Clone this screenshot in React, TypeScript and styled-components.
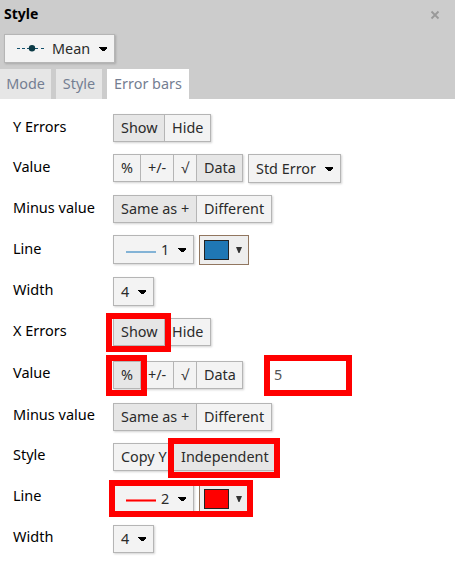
import React from 'react';
import styled, { createGlobalStyle } from 'styled-components';

const GlobalStyle = createGlobalStyle`
  * { box-sizing: border-box; }
  body {
    margin: 0;
    background: #fff;
    color: #111;
    font-family: "Noto Sans", "Open Sans", sans-serif;
    font-size: 14.4px;
  }
  button, input { font: inherit; color: inherit; border-radius: 0; }
`;

const Panel = styled.main`
  width: 455px;
  height: 581px;
  overflow: hidden;
  background: #fff;
`;

const Header = styled.header`
  height: 99px;
  background: #ccc;
  display: flex;
  flex-direction: column;
`;

const TitleBar = styled.div`
  height: 34px;
  padding: 0 15px 0 4px;
  display: flex;
  justify-content: space-between;
`;

const Title = styled.h1`
  margin: 0;
  font-size: 14px;
  line-height: 28px;
  font-weight: 700;
  color: #000;
`;

const CloseButton = styled.button`
  width: 10px;
  height: 10px;
  margin-top: 10px;
  padding: 0;
  border: 0;
  background: none;
  display: flex;
`;

const Toolbar = styled.div`
  height: 35px;
  padding-left: 4px;
`;

const Tabs = styled.nav`
  display: flex;
  gap: 5px;
`;

const Tab = styled.button<{ $width: number; $active?: boolean }>`
  width: ${p => p.$width}px;
  height: 30px;
  padding: 0 0 2px;
  border: 0;
  line-height: 30px;
  text-align: center;
  color: #747e92;
  background: ${p => (p.$active ? '#fff' : '#e6e6e6')};
`;

const Form = styled.section`
  padding: 15px 0 0 13px;
`;

const Row = styled.div<{ $height: number }>`
  height: ${p => p.$height}px;
  display: grid;
  grid-template-columns: 100px 1fr;
  align-items: start;
`;

const Label = styled.label<{ $lift: number }>`
  line-height: 20px;
  margin-top: ${p => 2 - p.$lift}px;
  font-size: 14.5px;
  color: #000;
`;

const Controls = styled.div`
  display: flex;
  align-items: flex-start;
  gap: 5px;
  position: relative;
`;

const Segments = styled.div`
  display: flex;
  height: 28px;
  border: 1px solid #b5b5b5;
  box-shadow: 1px 1px 2px rgba(0, 0, 0, 0.18);
`;

const Segment = styled.button<{ $width: number; $active?: boolean }>`
  width: ${p => p.$width}px;
  padding: 0 0 0 7px;
  border: 0;
  line-height: 26px;
  text-align: left;
  white-space: nowrap;
  color: #2b2b2b;
  background: ${p => (p.$active ? '#e6e6e6' : '#f3f3f3')};

  & + & { border-left: 1px solid #b5b5b5; }
`;

const Select = styled.button<{ $width: number; $height?: number }>`
  width: ${p => p.$width}px;
  height: ${p => p.$height ?? 29}px;
  padding: 0 7px;
  display: flex;
  align-items: center;
  justify-content: space-between;
  border: 1px solid #b5b5b5;
  background: #f3f3f3;
  box-shadow: 1px 1px 2px rgba(0, 0, 0, 0.18);
  color: #2b2b2b;
  line-height: ${p => (p.$height ?? 29) - 2}px;
  white-space: nowrap;
`;

const SelectValue = styled.span`
  display: flex;
  align-items: center;
`;

const MeanMarker = styled.svg`
  margin: 0 8px 1px 4px;
`;

const LineSample = styled.svg`
  margin: 4px 5px 0 5px;
`;

const ColorPicker = styled.button`
  width: 50px;
  height: 30px;
  padding: 0 6px 0 4px;
  display: flex;
  align-items: center;
  justify-content: space-between;
  border: 1px solid #91765f;
  background: #eee;
`;

const Swatch = styled.span<{ $color: string }>`
  width: 25px;
  height: 20px;
  border: 1px solid #222;
  background: ${p => p.$color};
`;

const NumberInput = styled.input`
  width: 76px;
  height: 28px;
  margin-left: 22px;
  padding: 0 0 2px 4px;
  border: 0;
  outline: 0;
  background: #fff;
  color: #555;
`;

const Highlight = styled.span<{ $x: number; $y: number; $w: number; $h: number }>`
  position: absolute;
  left: ${p => p.$x}px;
  top: ${p => p.$y}px;
  width: ${p => p.$w}px;
  height: ${p => p.$h}px;
  border: 6px solid #f00;
  pointer-events: none;
`;

const Caret = () => (
  <svg width="8" height="4" viewBox="0 0 8 4" shapeRendering="crispEdges">
    <path d="M0 0H8V1L5 4H3L0 1Z" fill="#000" />
  </svg>
);

const SmallCaret = () => (
  <svg width="6" height="6" viewBox="0 0 6 6">
    <path d="M0 0H6L3.5 6H2.5Z" fill="#333" />
  </svg>
);

type Option = [text: string, width: number];

function Choice({ options, active }: { options: Option[]; active: string }) {
  return (
    <Segments>
      {options.map(([text, width]) => (
        <Segment key={text} $width={width} $active={text === active}>{text}</Segment>
      ))}
    </Segments>
  );
}

function Field({ label, height, lift = 0, children }: {
  label: string; height: number; lift?: number; children: React.ReactNode;
}) {
  return (
    <Row $height={height}>
      <Label $lift={lift}>{label}</Label>
      <Controls>{children}</Controls>
    </Row>
  );
}

function LinePicker({ size, stroke, edge, color }: {
  size: number; stroke: string; edge: string; color: string;
}) {
  return (
    <>
      <Select $width={81}>
        <SelectValue>
          <LineSample width="30" height="3" shapeRendering="crispEdges">
            <rect width="30" height="3" fill={edge} />
            <rect y="1" width="30" height={size === 1 ? 2 : 1} fill={stroke} />
          </LineSample>
          {size}
        </SelectValue>
        <Caret />
      </Select>
      <ColorPicker>
        <Swatch $color={color} />
        <SmallCaret />
      </ColorPicker>
    </>
  );
}

const visibility: Option[] = [['Show', 50], ['Hide', 46]];
const valueTypes: Option[] = [['%', 26], ['+/-', 33], ['√', 23], ['Data', 46]];
const minusTypes: Option[] = [['Same as +', 82], ['Different', 75]];
const styleTypes: Option[] = [['Copy Y', 59], ['Independent', 102]];

export default function App() {
  return (
    <Panel>
      <GlobalStyle />
      <Header>
        <TitleBar>
          <Title>Style</Title>
          <CloseButton aria-label="Close">
            <svg width="10" height="10" viewBox="0 0 10 10">
              <path d="M1.5 1.5L8.5 8.5M8.5 1.5L1.5 8.5" stroke="#999" strokeWidth="1.8" />
            </svg>
          </CloseButton>
        </TitleBar>
        <Toolbar>
          <Select $width={111}>
            <SelectValue>
              <MeanMarker width="28" height="8" viewBox="0 0 28 8">
                <path d="M1 4.5H4M6 4.5H9M11 4.5H14M18 4.5H22M25 4.5H28" stroke="#12506b" />
                <circle cx="16" cy="4.3" r="3.2" fill="#0b3a45" />
              </MeanMarker>
              Mean
            </SelectValue>
            <Caret />
          </Select>
        </Toolbar>
        <Tabs>
          <Tab $width={51}>Mode</Tab>
          <Tab $width={46}>Style</Tab>
          <Tab $width={82} $active>Error bars</Tab>
        </Tabs>
      </Header>
      <Form>
        <Field label="Y Errors" height={40}>
          <Choice options={visibility} active="Show" />
        </Field>
        <Field label="Value" height={41}>
          <Choice options={valueTypes} active="Data" />
          <Select $width={93}>Std Error<Caret /></Select>
        </Field>
        <Field label="Minus value" height={40}>
          <Choice options={minusTypes} active="Same as +" />
        </Field>
        <Field label="Line" height={42} lift={-1}>
          <LinePicker size={1} stroke="#83b3d6" edge="#f3f3f3" color="#1f77b4" />
        </Field>
        <Field label="Width" height={41}>
          <Select $width={41}>4<Caret /></Select>
        </Field>
        <Field label="X Errors" height={43}>
          <Choice options={visibility} active="Show" />
          <Highlight $x={-7} $y={-5} $w={65} $h={39} />
        </Field>
        <Field label="Value" height={42} lift={1}>
          <Choice options={valueTypes} active="%" />
          <NumberInput defaultValue="5" />
          <Highlight $x={-7} $y={-6} $w={41} $h={41} />
          <Highlight $x={151} $y={-6} $w={88} $h={41} />
        </Field>
        <Field label="Minus value" height={40} lift={1}>
          <Choice options={minusTypes} active="Same as +" />
        </Field>
        <Field label="Style" height={41} lift={1}>
          <Choice options={styleTypes} active="Independent" />
          <Highlight $x={55} $y={-5} $w={112} $h={40} />
        </Field>
        <Field label="Line" height={41} lift={1}>
          <LinePicker size={2} stroke="#f00" edge="#ff7070" color="#f00" />
          <Highlight $x={-4} $y={-4} $w={144} $h={37} />
        </Field>
        <Field label="Width" height={41} lift={1}>
          <Select $width={41} $height={28}>4<Caret /></Select>
        </Field>
      </Form>
    </Panel>
  );
}
